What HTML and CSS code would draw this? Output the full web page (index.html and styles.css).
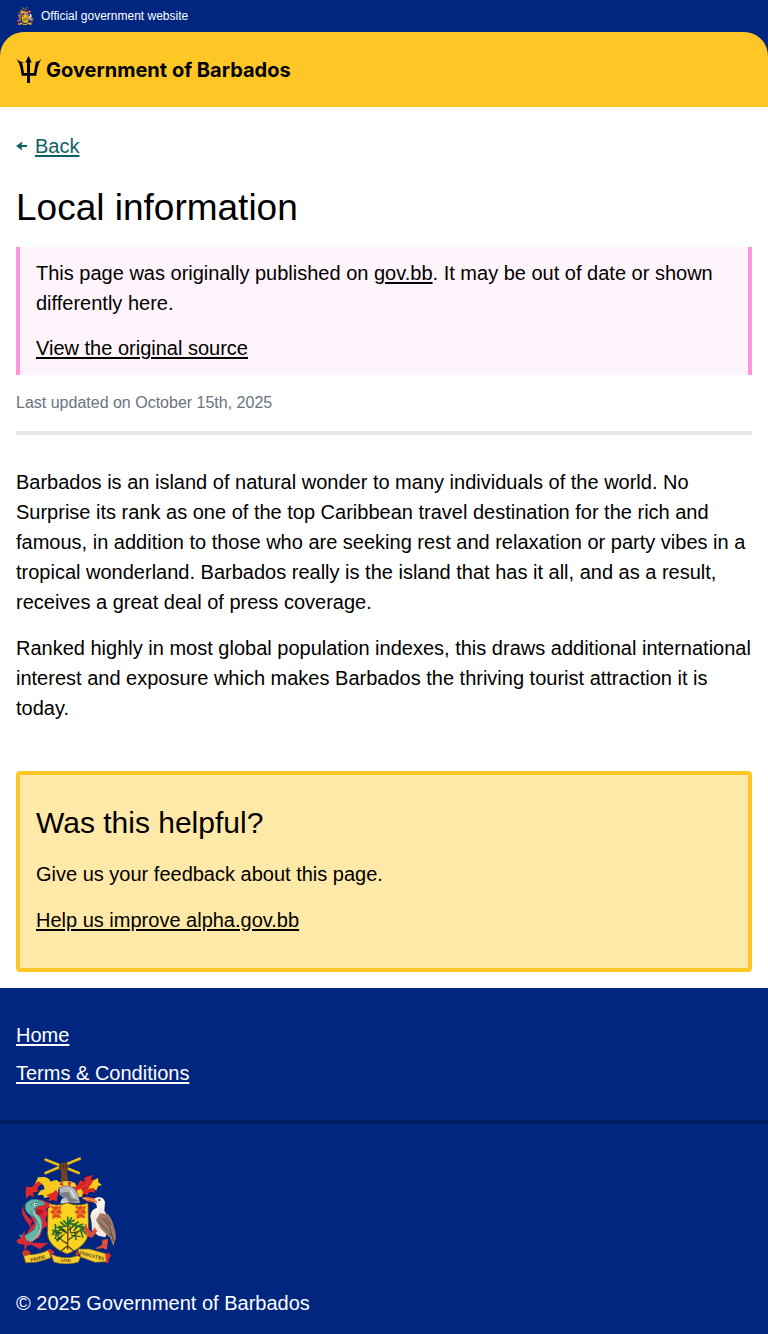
FILE: index.html
```
<!DOCTYPE html>
<html lang="en">
<head>
<meta charset="utf-8">
<meta name="viewport" content="width=device-width, initial-scale=1">
<title>Local information - Government of Barbados</title>
<link rel="stylesheet" href="styles.css">
</head>
<body>
<svg class="sprite" aria-hidden="true">
  <symbol id="crest" viewBox="18 18 300 324">
    <!-- crossed canes and fist -->
    <path d="M107 69 209 26M107 29 206 69" stroke="#f5c51b" stroke-width="8" stroke-linecap="round"/>
    <path d="M107 72 209 29M107 32 206 72" stroke="#8f6f10" stroke-width="1.5"/>
    <path d="M147 44q9-10 23-5l7 9-6 15 3 31h-22l2-30-7-8z" fill="#70431f"/>
    <path d="m151 43 3 12m5-14 2 13m6-12 2 12" stroke="#352319" stroke-width="2"/>
    <!-- mantling, left -->
    <path d="m84 82 20-1q14 3 18 14 8-5 18-5l10 8-6 26-4 20-14-6-22 6-6-10-16 2 8-14 14-5-4-12-12-6-14 5z" fill="#f7ca20"/>
    <path d="m48 110 18 1 18-17 12 7-13 10 1 14-14 2 1 14-12-6-11 11-1-20zm80 18 10-9 6 10-4 26-10-6-14 5 2-14-10-4z" fill="#e02a26"/>
    <!-- mantling, right -->
    <path d="m190 101 12 6 9-16 13 5-2-13 26-9-6 16 12-2-2 12 14 2-2 12-12 2 4 12-18-3-6 10-12-4-4 8-14-2-10-18z" fill="#e02a26"/>
    <path d="m250 92 14-9 1 14 11 8-13 4-4 13-10-8-16 2 9-11zm-49 29 12-5 6 10-3 14-11 2-6-8z" fill="#f7ca20"/>
    <path d="m206 109 20-12m-12 20 22-4" fill="none" stroke="#94231f" stroke-width="2"/>
    <!-- helmet -->
    <path d="M143 99q29-12 53 1l3 10-52 3z" fill="#f3cf31"/>
    <path d="m147 103 10-8 4 14zm26-8 12 3-8 12z" fill="#d92b25"/>
    <path d="M148 114q26-14 46 2l10 18 6 25-34-1-22 3 6-20-12-8z" fill="#b6b8bc" stroke="#646469" stroke-width="2"/>
    <path d="m150 128 26-3 8 18 24 9-30 6-8-14-16-4z" fill="#7d7e85"/>
    <path d="m182 120 12 22m-36 5-4 10 20-3" fill="none" stroke="#e6e6e3" stroke-width="4"/>
    <!-- shield -->
    <path d="M114 159q29 12 57-1 31 13 63 1l2 86q-3 44-65 67-57-22-59-62z" fill="#f9d31f" stroke="#5b4820" stroke-width="2"/>
    <path id="flower" d="m121 166 12 5 5-5 6 5 10-5-3 14 5 8-7 4 4 13-15-3-11 5 1-15-8-6 8-6z" fill="#df4a20"/>
    <use href="#flower" x="73"/>
    <path d="m126 174 10 10 12-10m-21 23 10-9 12 8m50-22 10 10 12-10m-21 23 10-9 12 8" fill="none" stroke="#f5a11d" stroke-width="3"/>
    <!-- fig tree -->
    <path d="m174 217-1 82m-1-18q-24-12-34-33m35 22q19-9 41-34m-40 15q-18-9-27-24m27 14q14-8 23-20m-25 67-19 15m21-14 18 15" fill="none" stroke="#574017" stroke-width="4"/>
    <path d="m126 241 18 2m-11 11 19-2m-14 17 16-7m-28-7 9-12m6 31 15-16m-16-28 22 10m-11-24 16 13m-19 2 25-3m-13-17 14 15m-1-26 1 29m11-27-14 26m23-18-21 10m28 4-24-3m29-6-20 14m34-7-26 9m37 1-26-2m33 11-26-6m18 18-15-15m4 25-7-22m-14 29-3-24m-55 8 13-22m-17-10 1 22m68-17-14 16m-56 24 9-24" stroke="#24702b" stroke-width="5"/>
    <path d="m134 246 23 3m-13 18 20-15m-12-20 17 12m36 1-22 4m29 11-29-5m-3-28 2 23m-34-11 21 8" stroke="#183e1c" stroke-width="3"/>
    <!-- dolphin -->
    <path d="M60 158q20-14 38-8l20 10 2 14-13 1 7 16-8 16 8 20-15 8-10 27-32 17-12-16 13-27 14-16-16-32z" fill="#d92734"/>
    <path d="M48 160q12-14 30-12l20 6 8 10-20 3-13 9 17 24q14 21-1 47-15 31-48 26l-13-18 18 1 25-16 7-17-2-17-22-16q-14-14-6-30z" fill="#63b5a7" stroke="#287b78" stroke-width="2"/>
    <path d="M71 188q29 31 16 62-9 18-29 25" fill="none" stroke="#d4dfc8" stroke-width="6" stroke-dasharray="3 3"/>
    <path d="m62 166 11-9 22 2M61 183l12 20 13 18 2 18" fill="none" stroke="#27736e" stroke-width="3" stroke-dasharray="5 3"/>
    <circle cx="75" cy="163" r="4" fill="#fff"/><circle cx="76" cy="163" r="2"/>
    <path d="M40 160q-4 20 12 38l14 14-4 20-12-16q-22-28-10-56z" fill="#d92734"/>
    <path d="m52 276-7-17-2-17-9 20-15 10q7 15 24 10l0 20 10-16 12-2 24 14 26-20-22 2z" fill="#db2938"/>
    <path d="m79 178 24 3-16 16-11-7z" fill="#a91827"/>
    <!-- pelican -->
    <path d="m240 150 23-8q18-2 22 14l-2 26-10 20-27 16-5-19q1-20 20-26l-2-11z" fill="#fff5ec"/>
    <path d="m253 145-22-5-16 3 15 11 34 5q-9-9-11-14z" fill="#f15b36"/>
    <path d="m218 144 43 9" stroke="#ffb04d" stroke-width="3"/>
    <circle cx="268" cy="150" r="3" fill="#24211f"/>
    <path d="m273 168-8 17-21 15 2 42 19 15 21 5 13-35-8-33z" fill="#f7e8dd"/>
    <path d="m270 190 25 3q19 26 23 70l-8 26-9-24-28-28-15-27z" fill="#a07a6b"/>
    <path d="m277 203 22 28 12 43m-42-57 37 42m-19-56 16 22" fill="none" stroke="#5f4840" stroke-width="3"/>
    <path d="m254 233-7 16-17-16-2-10-5 12 4 12 15 6-14 3 18 6 15-20m18 27-2 17-18 9 21-2 9 5 4-31" fill="#dc5135" stroke="#dc5135" stroke-width="3"/>
    <!-- motto ribbon -->
    <path d="m38 306 22 8q32-1 57-15l6 24-17 6q-31 12-59 9z" fill="#f7cd31" stroke="#806017" stroke-width="2"/>
    <path d="m123 312 17 7q34 9 62-2l10 4-7 16q-38 10-74-1z" fill="#f7cd31" stroke="#806017" stroke-width="2"/>
    <path d="m203 297 35 0 50 14 4 24-37 2-43-16z" fill="#f7cd31" stroke="#806017" stroke-width="2"/>
    <path d="m38 302 14-3 10 8-6 8-12 4zm72-2 12-3 12 10-10 8zm86 8 8-6 3 11-9 6zm90 6 10-6 8 8-8 12 0 10-8 1z" fill="#d8302d"/>
    <g class="motto">
      <text x="62" y="335" transform="rotate(-12 62 335)">PRIDE</text>
      <text x="150" y="337">AND</text>
      <text x="208" y="313" transform="rotate(14 208 313)">INDUSTRY</text>
    </g>
  </symbol>
</svg>

<div class="official">
  <svg class="official-crest" aria-hidden="true"><use href="#crest"/></svg>
  <span>Official government website</span>
</div>
<div class="header-back">
  <header class="header">
    <a class="brand" href="#">
      <svg class="trident" viewBox="0 0 26 28" aria-hidden="true">
        <path d="M12.500 0 16 7l-2-.6V17.500h4.200q1-7.500 2-11L18.500 6.500Q24 5.500 26 3q-3 4-4 9l-1.500 8.500H14V28h-3v-7.500H5.500L4 12Q3 7 0 3q2 2.500 7.500 3.500l-1.700.8q1 3 2 10.200H11V6.400L9 7z"/>
      </svg>
      <span>Government of Barbados</span>
    </a>
  </header>
</div>

<main class="main">
  <a class="back" href="#">
    <svg class="back-arrow" viewBox="0 0 12 10" aria-hidden="true"><path d="m0 5 6.500-4.500-1 3.400H11v2.200H5.500l1 3.400z"/></svg>
    <span>Back</span>
  </a>
  <h1>Local information</h1>
  <div class="notice">
    <p>This page was originally published on <a href="#">gov.bb</a>. It may be out of date or shown differently here.</p>
    <p><a href="#">View the original source</a></p>
  </div>
  <p class="updated">Last updated on October 15th, 2025</p>
  <article class="article">
    <p>Barbados is an island of natural wonder to many individuals of the world. No Surprise its rank as one of the top Caribbean travel destination for the rich and famous, in addition to those who are seeking rest and relaxation or party vibes in a tropical wonderland. Barbados really is the island that has it all, and as a result, receives a great deal of press coverage.</p>
    <p>Ranked highly in most global population indexes, this draws additional international interest and exposure which makes Barbados the thriving tourist attraction it is today.</p>
  </article>
  <section class="feedback">
    <h2>Was this helpful?</h2>
    <p>Give us your feedback about this page.</p>
    <p><a href="#">Help us improve alpha.gov.bb</a></p>
  </section>
</main>

<footer class="footer">
  <nav class="footer-nav">
    <a href="#">Home</a>
    <a href="#">Terms &amp; Conditions</a>
  </nav>
  <div class="footer-end">
    <svg class="footer-crest" role="img" aria-label="Barbados coat of arms"><use href="#crest"/></svg>
    <p>© 2025 Government of Barbados</p>
  </div>
</footer>
</body>
</html>
```
FILE: styles.css
```
* { box-sizing: border-box; }
body {
  margin: 0;
  background: #fff;
  color: #000;
  font-family: "Liberation Sans", Arial, sans-serif;
  font-size: 20px;
  line-height: 30px;
}
h1, h2, p { margin: 0; }
a {
  color: inherit;
  text-decoration-thickness: 2px;
  text-underline-offset: 2px;
}
.sprite { position: absolute; width: 0; height: 0; }
.motto { font: bold 15px "Liberation Serif", serif; fill: #54400f; }

.official {
  display: flex;
  align-items: center;
  gap: 7px;
  height: 32px;
  padding: 0 16px;
  background: #00267f;
  color: #fff;
  font-size: 12px;
}
.official-crest { width: 18px; height: 18px; }
.header-back { background: #00267f; }
.header {
  padding: 24px 16px;
  border-radius: 24px 24px 0 0;
  background: #ffc726;
}
.brand {
  display: flex;
  align-items: center;
  gap: 4px;
  height: 27px;
  font-family: Inter, sans-serif;
  font-size: 20px;
  font-weight: 700;
  text-decoration: none;
}
.trident { width: 26px; height: 27px; }

.main { padding: 24px 16px 16px; }
.back {
  display: flex;
  align-items: center;
  gap: 7px;
  width: max-content;
  color: #0e5f64;
  text-decoration: none;
}
.back span {
  text-decoration: underline 2px;
  text-underline-offset: 2px;
}
.back-arrow { width: 12px; height: 10px; fill: currentColor; }
h1 {
  margin: 20px 0 12px;
  font-size: 37px;
  font-weight: 400;
  line-height: 54px;
}
.notice {
  display: grid;
  gap: 15px;
  padding: 11px 16px 12px;
  border: solid #ff94db;
  border-width: 0 4px;
  background: #fff4fb;
}
.updated {
  padding: 16px 0;
  border-bottom: 4px solid #e5e7eb;
  color: #6b7280;
  font-size: 16px;
  line-height: 24px;
}
.article {
  display: grid;
  gap: 16px;
  padding: 32px 0 48px;
}
.feedback {
  display: grid;
  gap: 16px;
  padding: 28px 16px 33px;
  border: 4px solid #ffc726;
  border-radius: 4px;
  background: #ffe9a8;
}
h2 { font-size: 30px; font-weight: 400; line-height: 40px; }

.footer { background: #00267f; color: #fff; }
.footer-nav {
  display: flex;
  flex-direction: column;
  align-items: flex-start;
  gap: 8px;
  padding: 32px 16px;
  border-bottom: 4px solid #001c61;
}
.footer-end { padding: 32px 16px 16px; }
.footer-crest { display: block; width: 100px; height: 108px; margin-bottom: 24px; }
```
